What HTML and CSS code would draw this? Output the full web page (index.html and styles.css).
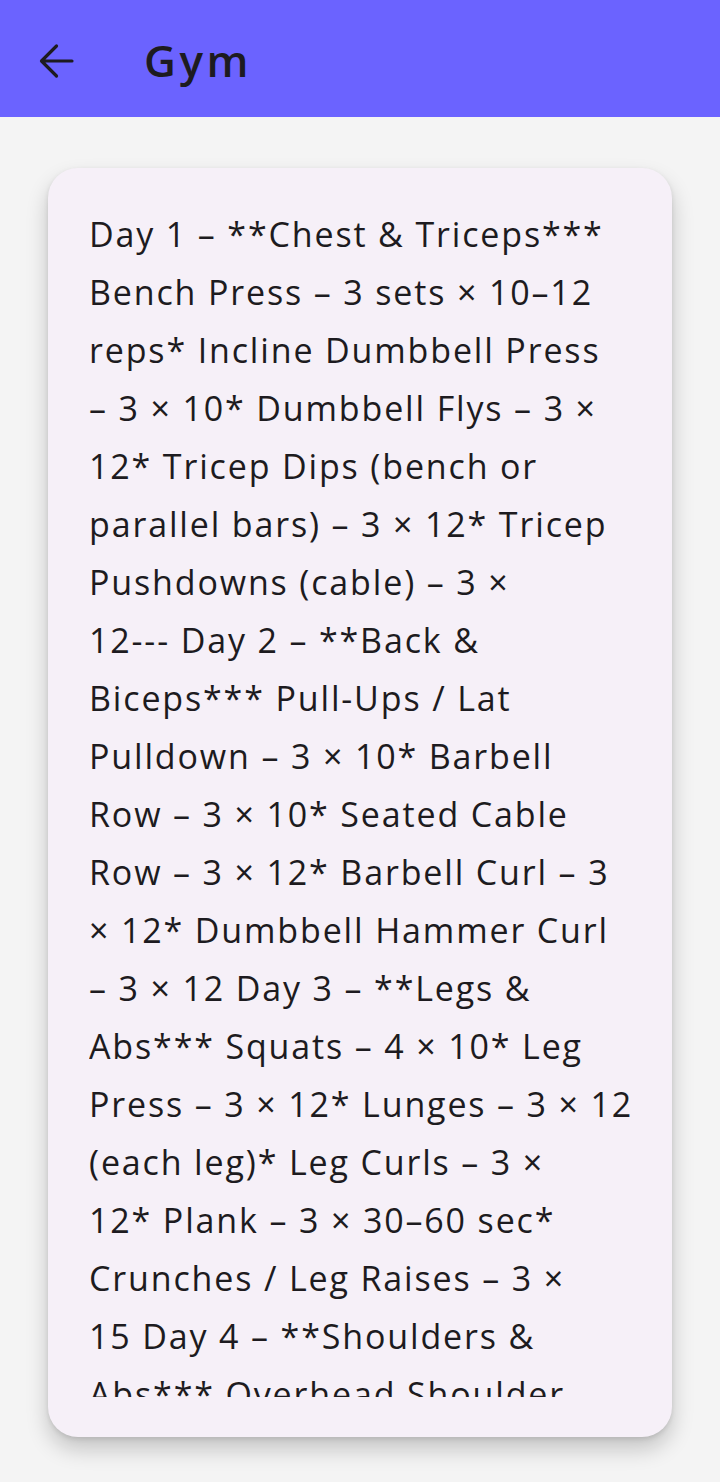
FILE: index.html
```html
<!DOCTYPE html>
<html>
<head>
<meta charset="utf-8">
<link rel="stylesheet" href="styles.css">
</head>
<body>
<header class="appbar">
  <button class="back" aria-label="Back">
    <svg width="36" height="36" viewBox="0 0 36 36"><path d="M34 18H4M18.5 3 3.5 18l15 15" fill="none" stroke="#1d1b20" stroke-width="3.2" stroke-linecap="round" stroke-linejoin="round"/></svg>
  </button>
  <h1 class="title">Gym</h1>
</header>
<main class="content">
  <section class="card">
    <div class="text">
      <span class="line">Day 1 – **Chest &amp; Triceps***</span>
      <span class="line">Bench Press – 3 sets × 10–12</span>
      <span class="line">reps* Incline Dumbbell Press</span>
      <span class="line">– 3 × 10* Dumbbell Flys – 3 ×</span>
      <span class="line">12* Tricep Dips (bench or</span>
      <span class="line">parallel bars) – 3 × 12* Tricep</span>
      <span class="line">Pushdowns (cable) – 3 ×</span>
      <span class="line">12--- Day 2 – **Back &amp;</span>
      <span class="line">Biceps*** Pull-Ups / Lat</span>
      <span class="line">Pulldown – 3 × 10* Barbell</span>
      <span class="line">Row – 3 × 10* Seated Cable</span>
      <span class="line">Row – 3 × 12* Barbell Curl – 3</span>
      <span class="line">× 12* Dumbbell Hammer Curl</span>
      <span class="line">– 3 × 12 Day 3 – **Legs &amp;</span>
      <span class="line">Abs*** Squats – 4 × 10* Leg</span>
      <span class="line">Press – 3 × 12* Lunges – 3 × 12</span>
      <span class="line">(each leg)* Leg Curls – 3 ×</span>
      <span class="line">12* Plank – 3 × 30–60 sec*</span>
      <span class="line">Crunches / Leg Raises – 3 ×</span>
      <span class="line">15 Day 4 – **Shoulders &amp;</span>
      <span class="line">Abs*** Overhead Shoulder</span>
      <span class="line">Press – 3 × 10* Lateral Raises</span>
    </div>
  </section>
</main>
</body>
</html>
```
FILE: styles.css
```css
html, body {
  margin: 0;
  padding: 0;
}
body {
  width: 720px;
  height: 1482px;
  background: #f4f4f4;
  font-family: "Open Sans", "DejaVu Sans", sans-serif;
  color: #1d1b20;
  overflow: hidden;
}
.appbar {
  height: 117px;
  background: #6b63ff;
  display: flex;
  align-items: center;
  padding-left: 38px;
  box-sizing: border-box;
}
.back {
  width: 36px;
  height: 36px;
  padding: 0;
  border: 0;
  background: none;
  display: flex;
  align-items: center;
  justify-content: center;
  position: relative;
  top: 2px;
}
.title {
  margin: 0 0 0 70px;
  font-size: 44px;
  font-weight: 600;
  letter-spacing: 3.5px;
  line-height: 1;
  position: relative;
  top: 1px;
}
.content {
  padding: 51px 48px 45px;
}
.card {
  background: #f6f0f8;
  border-radius: 30px;
  height: 1269px;
  box-sizing: border-box;
  padding: 37px 40px 40px 41px;
  box-shadow: 0 12px 22px rgba(0,0,0,0.2), 0 2px 5px rgba(0,0,0,0.1);
}
.text {
  height: 1192px;
  overflow: hidden;
  font-size: 34px;
  line-height: 58px;
  letter-spacing: 1.85px;
}
.line {
  display: block;
  white-space: nowrap;
}
```
